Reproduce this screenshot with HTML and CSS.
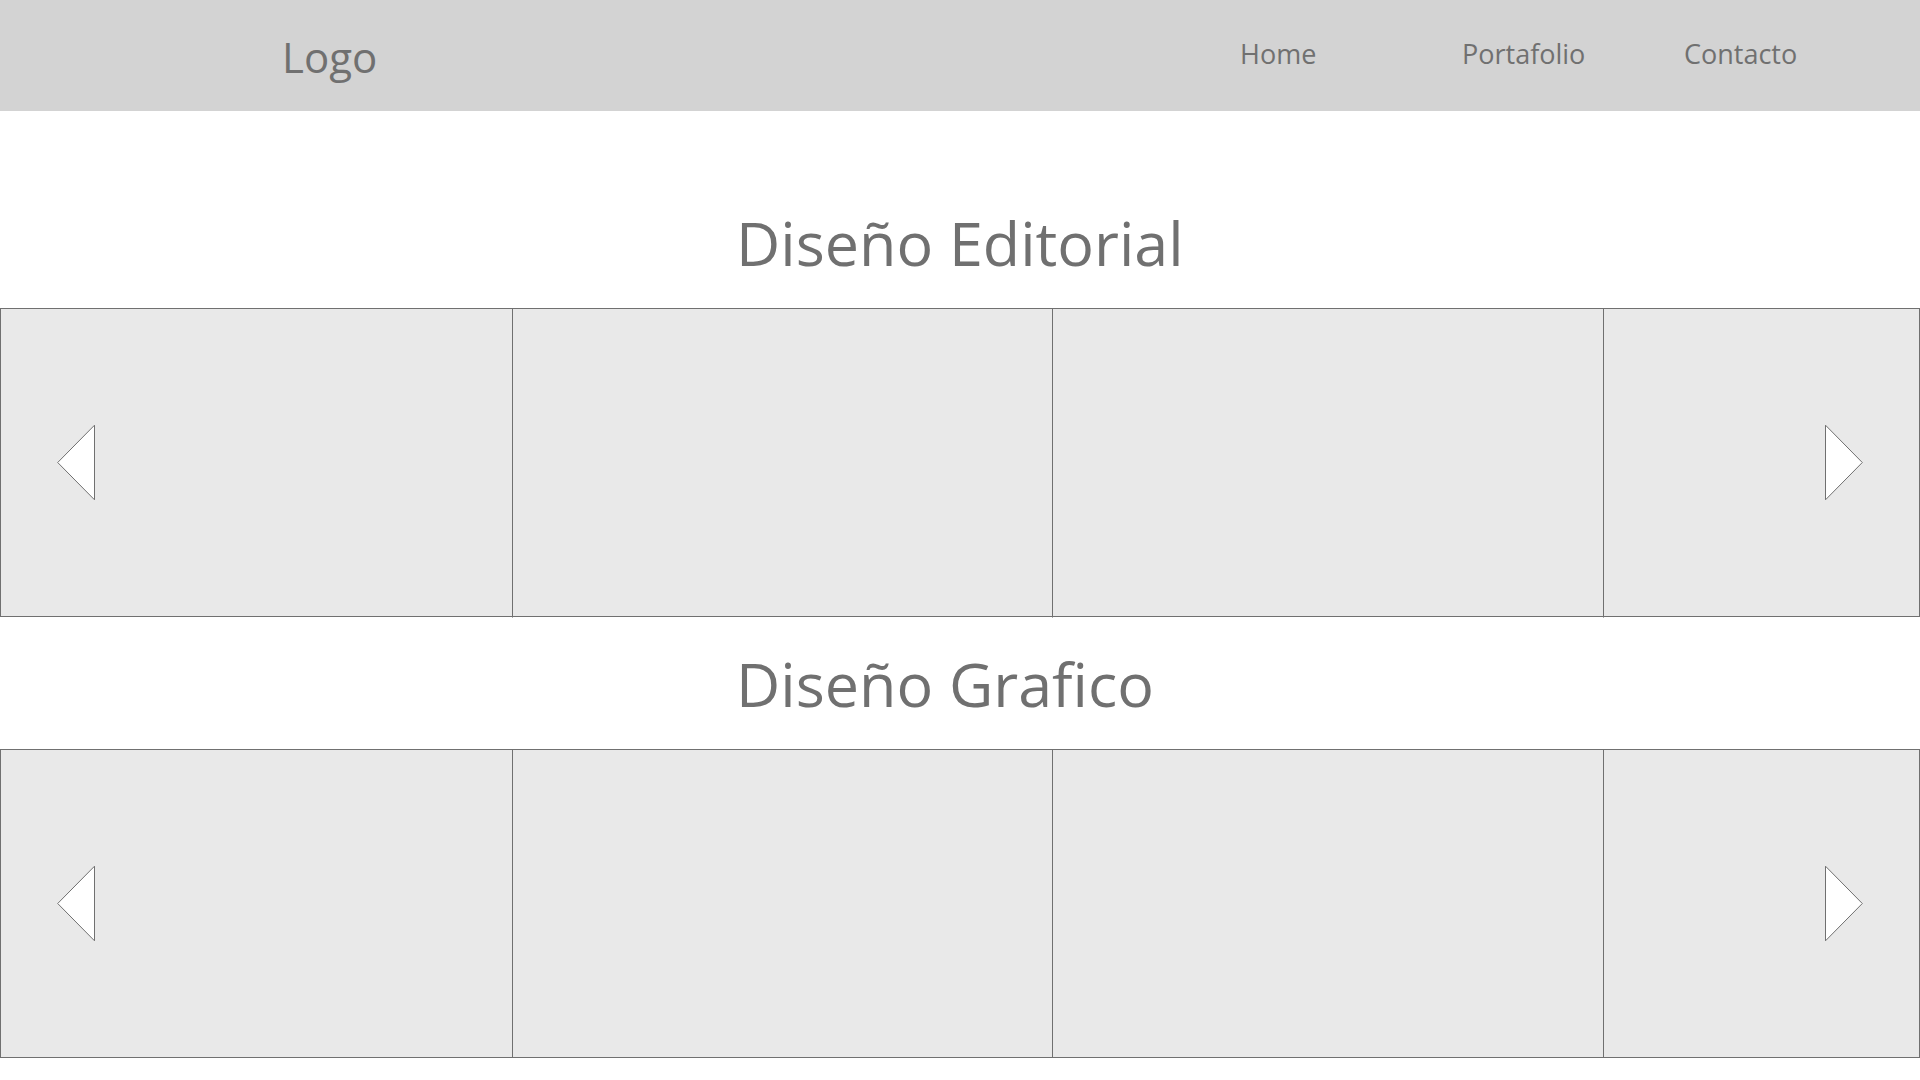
FILE: index.html
```html
<!DOCTYPE html>
<html lang="es">
<head>
<meta charset="utf-8">
<meta name="viewport" content="width=device-width, initial-scale=1">
<title>Portafolio</title>
<link rel="stylesheet" href="styles.css">
</head>
<body>
<header class="header">
  <a class="logo" href="#">Logo</a>
  <nav class="nav">
    <a href="#">Home</a>
    <a href="#">Portafolio</a>
    <a href="#">Contacto</a>
  </nav>
</header>
<main class="main">
  <section class="gallery">
    <h2 class="title">Diseño Editorial</h2>
    <div class="carousel">
      <div class="tile"></div>
      <div class="tile"></div>
      <div class="tile"></div>
      <div class="tile"></div>
      <button class="arrow prev" type="button" aria-label="Anterior">
        <svg width="39" height="77" viewBox="0 0 39 77"><path d="M37.5 1.2V75.8L.7 38.5z"/></svg>
      </button>
      <button class="arrow next" type="button" aria-label="Siguiente">
        <svg width="39" height="77" viewBox="0 0 39 77"><path d="M1.5 1.2V75.8L38.3 38.5z"/></svg>
      </button>
    </div>
  </section>
  <section class="gallery">
    <h2 class="title">Diseño Grafico</h2>
    <div class="carousel">
      <div class="tile"></div>
      <div class="tile"></div>
      <div class="tile"></div>
      <div class="tile"></div>
      <button class="arrow prev" type="button" aria-label="Anterior">
        <svg width="39" height="77" viewBox="0 0 39 77"><path d="M37.5 1.2V75.8L.7 38.5z"/></svg>
      </button>
      <button class="arrow next" type="button" aria-label="Siguiente">
        <svg width="39" height="77" viewBox="0 0 39 77"><path d="M1.5 1.2V75.8L38.3 38.5z"/></svg>
      </button>
    </div>
  </section>
</main>
</body>
</html>
```
FILE: styles.css
```css
* {
  box-sizing: border-box;
}

body {
  margin: 0;
  background: #fff;
  color: #707070;
  font-family: "Segoe UI", "Open Sans", "Noto Sans", sans-serif;
}

.header {
  display: flex;
  justify-content: space-between;
  align-items: flex-start;
  padding: 27px 14px 24px 282px;
  background: #d3d3d3;
}

.header a {
  color: inherit;
  text-decoration: none;
}

.logo {
  font-size: 42px;
  line-height: 60px;
}

.nav {
  display: grid;
  grid-template-columns: repeat(3, 222px);
  padding-top: 7px;
  font-size: 27px;
  line-height: 40px;
}

.main {
  padding-top: 65px;
}

.title {
  width: 448px;
  margin: 0 auto;
  padding: 22px 0 20px;
  font-size: 61px;
  font-weight: 400;
  line-height: 90px;
  white-space: nowrap;
}

.carousel {
  position: relative;
  display: grid;
  grid-template-columns: 512fr 540fr 551fr 316fr;
  border-right: 1px solid #707070;
}

.tile {
  position: relative;
  height: 309px;
  border: solid #707070;
  border-width: 1px 0 1px 1px;
  background: #e9e9e9;
}

/* Divider ends just past the bottom border */
.tile + .tile::after {
  content: "";
  position: absolute;
  left: -1px;
  bottom: -2px;
  width: 1px;
  height: 1px;
  background: #b0b0b0;
}

.arrow {
  position: absolute;
  top: 116px;
  padding: 0;
  border: 0;
  background: none;
  line-height: 0;
  cursor: pointer;
}

.arrow path {
  fill: #fff;
  stroke: #707070;
}

.prev {
  left: 57px;
}

.next {
  right: 56px;
}
```
